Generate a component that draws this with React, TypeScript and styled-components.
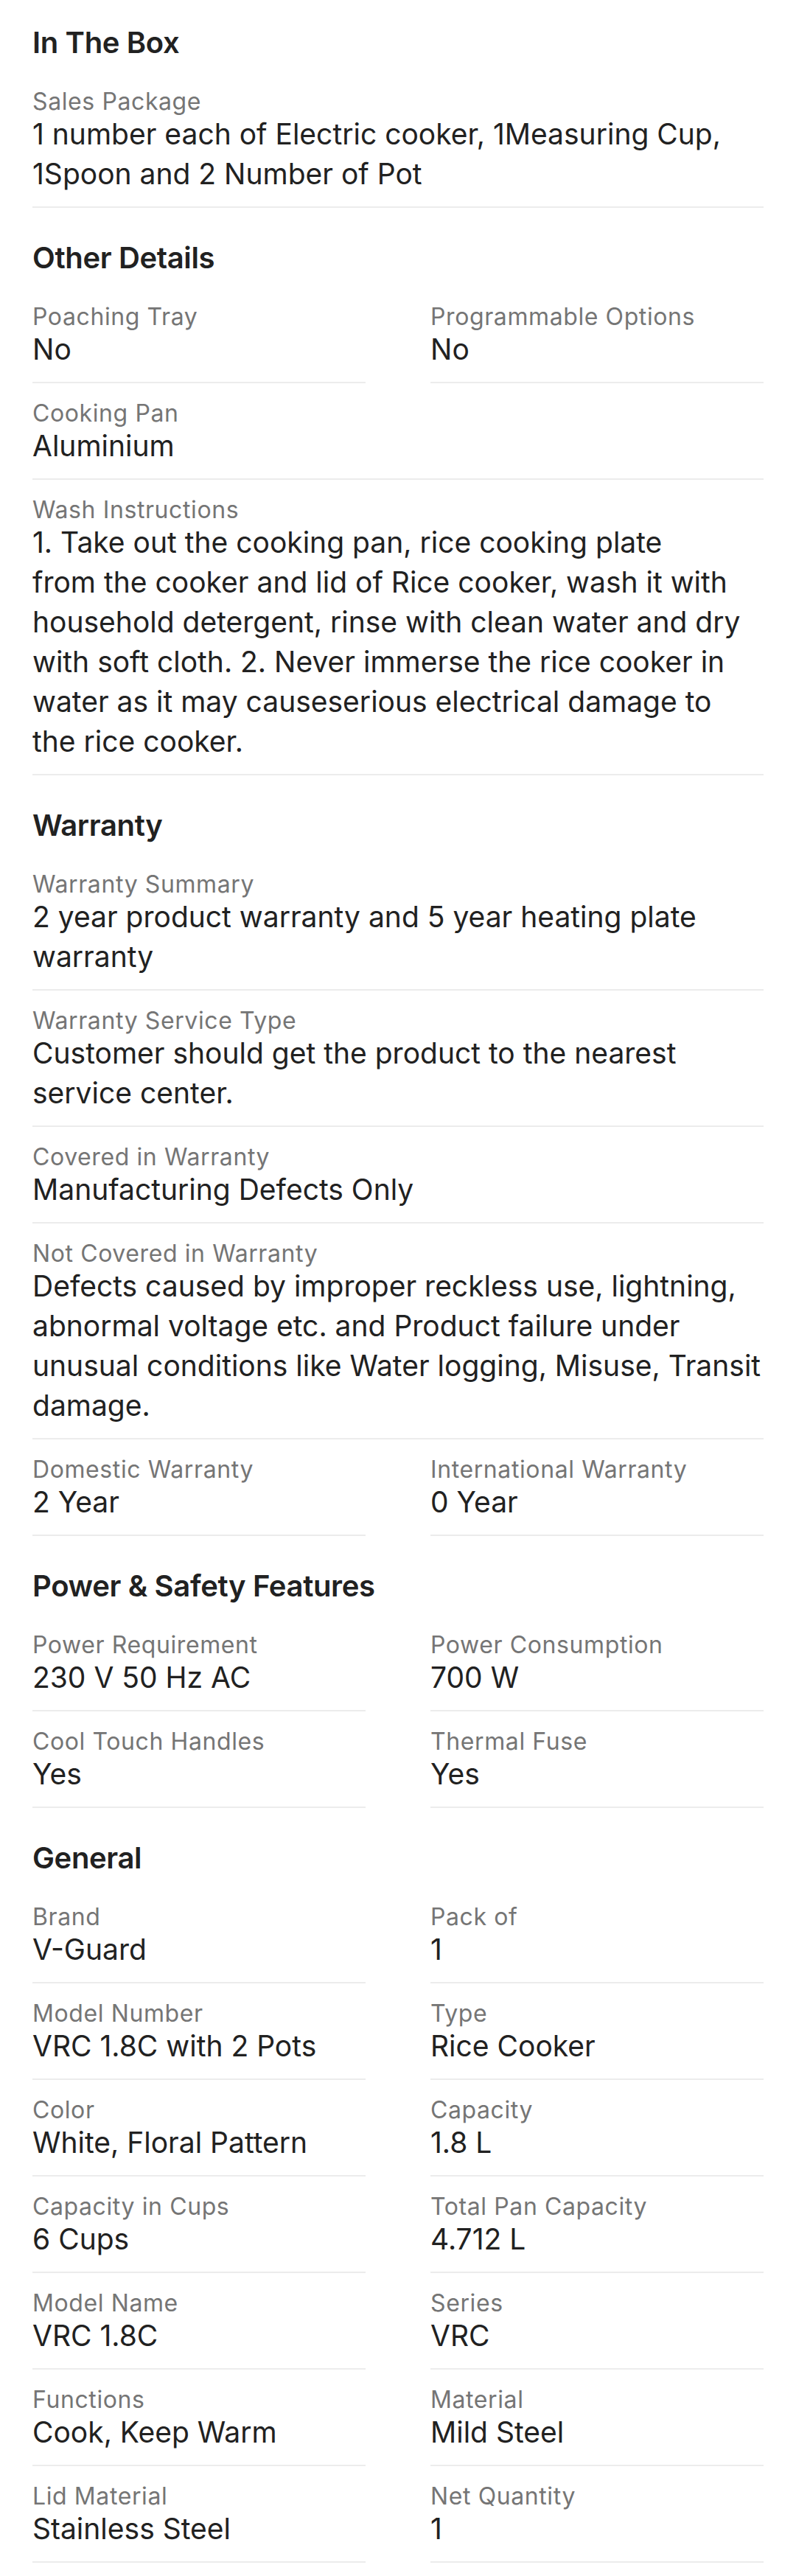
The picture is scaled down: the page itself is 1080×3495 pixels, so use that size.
import React from 'react'
import styled, { createGlobalStyle } from 'styled-components'

type Spec = {
  label: string
  value: React.ReactNode
  full?: boolean
}

type Section = {
  title: string
  specs: Spec[]
}

const sections: Section[] = [
  {
    title: 'In The Box',
    specs: [
      {
        label: 'Sales Package',
        value: '1 number each of Electric cooker, 1Measuring Cup, 1Spoon and 2 Number of Pot',
        full: true,
      },
    ],
  },
  {
    title: 'Other Details',
    specs: [
      { label: 'Poaching Tray', value: 'No' },
      { label: 'Programmable Options', value: 'No' },
      { label: 'Cooking Pan', value: 'Aluminium', full: true },
      {
        label: 'Wash Instructions',
        value: (
          <>
            1. Take out the cooking pan, rice cooking plate
            <br />
            from the cooker and lid of Rice cooker, wash it with household detergent, rinse with
            clean water and dry with soft cloth. 2. Never immerse the rice cooker in water as it may
            causeserious electrical damage to
            <br />
            the rice cooker.
          </>
        ),
        full: true,
      },
    ],
  },
  {
    title: 'Warranty',
    specs: [
      {
        label: 'Warranty Summary',
        value: '2 year product warranty and 5 year heating plate warranty',
        full: true,
      },
      {
        label: 'Warranty Service Type',
        value: 'Customer should get the product to the nearest service center.',
        full: true,
      },
      { label: 'Covered in Warranty', value: 'Manufacturing Defects Only', full: true },
      {
        label: 'Not Covered in Warranty',
        value:
          'Defects caused by improper reckless use, lightning, abnormal voltage etc. and Product failure under unusual conditions like Water logging, Misuse, Transit damage.',
        full: true,
      },
      { label: 'Domestic Warranty', value: '2 Year' },
      { label: 'International Warranty', value: '0 Year' },
    ],
  },
  {
    title: 'Power & Safety Features',
    specs: [
      { label: 'Power Requirement', value: '230 V 50 Hz AC' },
      { label: 'Power Consumption', value: '700 W' },
      { label: 'Cool Touch Handles', value: 'Yes' },
      { label: 'Thermal Fuse', value: 'Yes' },
    ],
  },
  {
    title: 'General',
    specs: [
      { label: 'Brand', value: 'V-Guard' },
      { label: 'Pack of', value: '1' },
      { label: 'Model Number', value: 'VRC 1.8C with 2 Pots' },
      { label: 'Type', value: 'Rice Cooker' },
      { label: 'Color', value: 'White, Floral Pattern' },
      { label: 'Capacity', value: '1.8 L' },
      { label: 'Capacity in Cups', value: '6 Cups' },
      { label: 'Total Pan Capacity', value: '4.712 L' },
      { label: 'Model Name', value: 'VRC 1.8C' },
      { label: 'Series', value: 'VRC' },
      { label: 'Functions', value: 'Cook, Keep Warm' },
      { label: 'Material', value: 'Mild Steel' },
      { label: 'Lid Material', value: 'Stainless Steel' },
      { label: 'Net Quantity', value: '1' },
    ],
  },
]

const App = (): JSX.Element => {
  return (
    <>
      <GlobalStyle />
      <Page>
        {sections.map((section) => (
          <SectionBlock key={section.title}>
            <SectionTitle>{section.title}</SectionTitle>
            <SpecGrid>
              {section.specs.map((spec) => (
                <SpecItem key={spec.label} $full={spec.full}>
                  <SpecLabel>{spec.label}</SpecLabel>
                  <SpecValue>{spec.value}</SpecValue>
                </SpecItem>
              ))}
            </SpecGrid>
          </SectionBlock>
        ))}
      </Page>
    </>
  )
}

export default App

/* =================================================== */
const GlobalStyle = createGlobalStyle`
  html, body {
    margin: 0;
    padding: 0;
    background: #ffffff;
  }
  body {
    font-family: Inter, "Noto Sans", "Liberation Sans", sans-serif;
    -webkit-font-smoothing: antialiased;
  }
`

const Page = styled.div`
  box-sizing: border-box;
  width: 1080px;
  padding: 34px 44px 19px;
  background: #ffffff;
  display: flex;
  flex-direction: column;
  gap: 44px;
`

const SectionBlock = styled.section`
  display: flex;
  flex-direction: column;
`

const SectionTitle = styled.h2`
  margin: 0 0 15px;
  font-size: 40px;
  line-height: 48px;
  font-weight: 600;
  letter-spacing: -0.35px;
  color: #212121;
`

const SpecGrid = styled.div`
  display: grid;
  grid-template-columns: 1fr 1fr;
  column-gap: 88px;
`

const SpecItem = styled.div<{ $full?: boolean }>`
  grid-column: ${(p) => (p.$full ? '1 / -1' : 'auto')};
  display: flex;
  flex-direction: column;
  padding: 23px 0 17px;
  border-bottom: 2px solid #ececec;
`

const SpecLabel = styled.div`
  font-size: 32px;
  line-height: 35px;
  letter-spacing: 0.6px;
  color: #757575;
`

const SpecValue = styled.div`
  font-size: 39px;
  line-height: 54px;
  color: #212121;
`
